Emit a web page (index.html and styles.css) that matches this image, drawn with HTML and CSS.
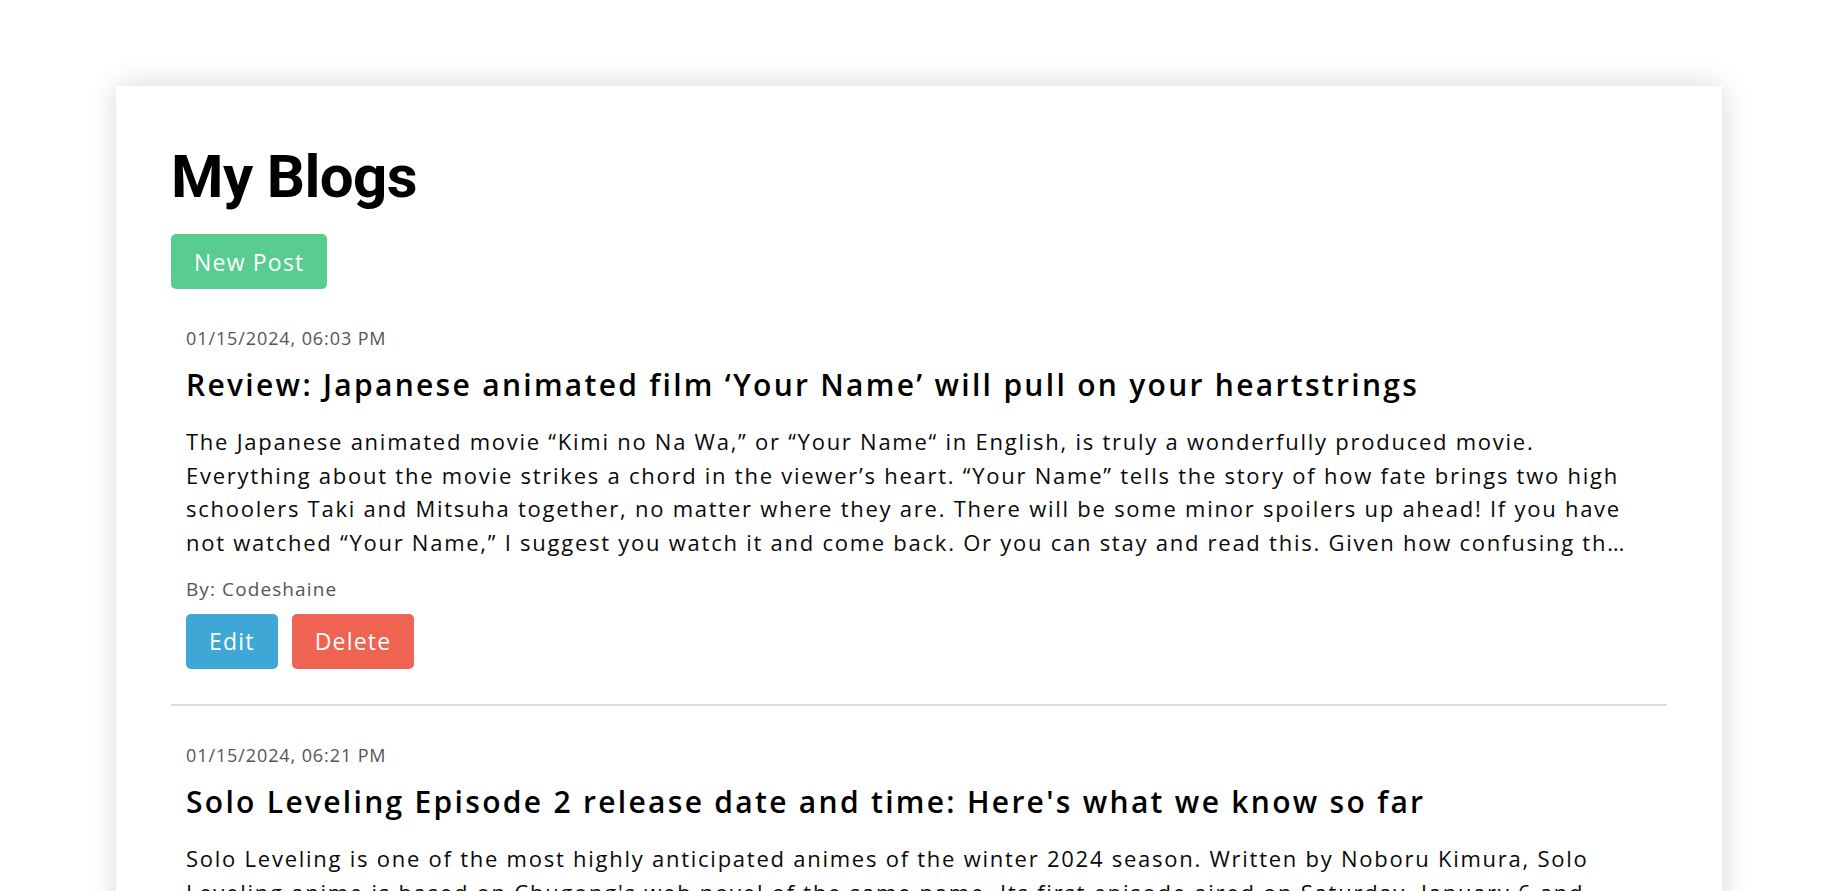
FILE: index.html
```html
<!DOCTYPE html>
<html lang="en">
<head>
<meta charset="utf-8">
<title>My Blogs</title>
<link rel="stylesheet" href="styles.css">
</head>
<body>
<main class="card">
  <h1 class="page-title">My Blogs</h1>
  <button class="btn btn-green">New Post</button>
  <ul class="post-list">
    <li class="post">
      <div class="post-date">01/15/2024, 06:03 PM</div>
      <h2 class="post-title">Review: Japanese animated film ‘Your Name’ will pull on your heartstrings</h2>
      <p class="post-body">The Japanese animated movie “Kimi no Na Wa,” or “Your Name“ in English, is truly a wonderfully produced movie.<br>Everything about the movie strikes a chord in the viewer’s heart. “Your Name” tells the story of how fate brings two high<br>schoolers Taki and Mitsuha together, no matter where they are. There will be some minor spoilers up ahead! If you have<br>not watched “Your Name,” I suggest you watch it and come back. Or you can stay and read this. Given how confusing th…</p>
      <div class="post-author">By: Codeshaine</div>
      <div class="post-actions">
        <button class="btn btn-blue">Edit</button>
        <button class="btn btn-red">Delete</button>
      </div>
    </li>
    <li class="post">
      <div class="post-date">01/15/2024, 06:21 PM</div>
      <h2 class="post-title">Solo Leveling Episode 2 release date and time: Here's what we know so far</h2>
      <p class="post-body">Solo Leveling is one of the most highly anticipated animes of the winter 2024 season. Written by Noboru Kimura, Solo<br>Leveling anime is based on Chugong's web novel of the same name. Its first episode aired on Saturday, January 6 and<br>has already gained a massive following among fans of the original manhwa. Here's everything we know about the<br>release date and time of the second episode, along with where you can stream it and what to expect from it next…</p>
      <div class="post-author">By: Codeshaine</div>
      <div class="post-actions">
        <button class="btn btn-blue">Edit</button>
        <button class="btn btn-red">Delete</button>
      </div>
    </li>
  </ul>
</main>
</body>
</html>
```
FILE: styles.css
```css
html {
  scrollbar-width: none;
}
html::-webkit-scrollbar {
  display: none;
}
body {
  margin: 0;
  background: #ffffff;
  font-family: "Open Sans", "Noto Sans", Arial, sans-serif;
  color: #000;
}
.card {
  width: 1606px;
  box-sizing: border-box;
  margin: 86px 0 40px 116px;
  padding: 56px 55px 40px;
  background: #fff;
  box-shadow: 0 0 26px rgba(0, 0, 0, 0.16);
}
.page-title {
  margin: 0;
  font-family: Roboto, "Liberation Sans", sans-serif;
  font-weight: 700;
  font-size: 60px;
  line-height: 70px;
  letter-spacing: -0.6px;
  color: #000;
}
.btn {
  display: inline-flex;
  align-items: center;
  justify-content: center;
  height: 55px;
  padding: 0 23px;
  border: none;
  border-radius: 5px;
  font-family: "Open Sans", "Noto Sans", sans-serif;
  font-size: 23px;
  letter-spacing: 1.2px;
  color: #fff;
  cursor: pointer;
}
.page-title + .btn {
  margin-top: 22px;
}
.btn-green { background: #59cd90; }
.btn-blue { background: #3fa7d6; }
.btn-red { background: #ee6352; }
.post-list {
  list-style: none;
  margin: 0;
  padding: 0;
}
.post {
  padding: 37px 15px 35px;
  border-bottom: 2px solid #dcdcdc;
}
.post-date {
  font-size: 18px;
  line-height: 24px;
  letter-spacing: 0.9px;
  color: #555;
}
.post-title {
  margin: 15px 0 0;
  font-size: 30px;
  line-height: 40px;
  font-weight: 600;
  letter-spacing: 2.3px;
  color: #000;
}
.post-body {
  margin: 20px 0 0;
  font-size: 22px;
  line-height: 33.7px;
  letter-spacing: 1.75px;
  color: #0a0a0a;
  white-space: nowrap;
  overflow: hidden;
}
.post-author {
  margin-top: 16px;
  font-size: 19px;
  line-height: 26px;
  letter-spacing: 1.1px;
  color: #555;
}
.post-actions {
  display: flex;
  gap: 14px;
  margin-top: 12px;
}
```
